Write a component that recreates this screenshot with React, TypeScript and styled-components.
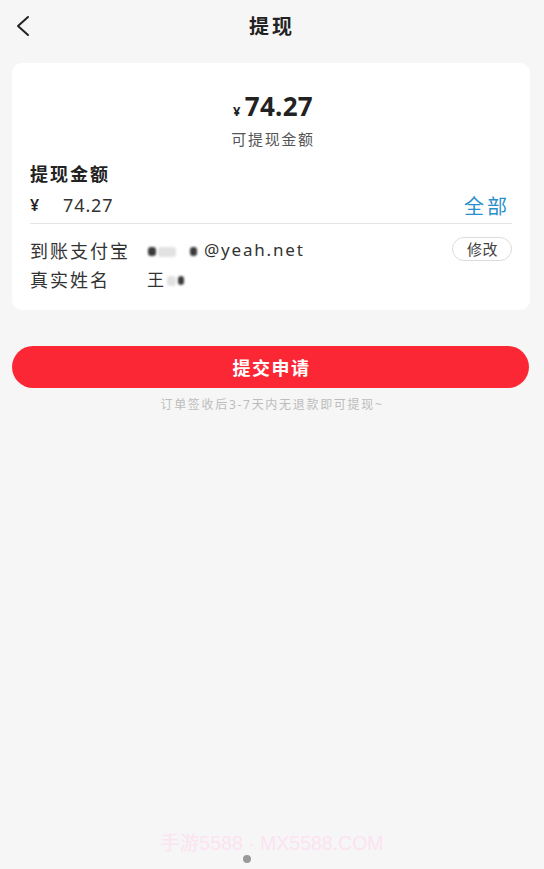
import React from 'react';
import styled, { createGlobalStyle } from 'styled-components';

const GlobalStyle = createGlobalStyle`
  html, body {
    margin: 0;
    padding: 0;
    background: #f6f6f6;
  }
  body {
    font-family: "Noto Sans", "Noto Sans CJK SC", sans-serif;
    color: #333;
  }
`;

const Page = styled.div`
  width: 544px;
  height: 869px;
  display: flex;
  flex-direction: column;
  background: #f6f6f6;
  overflow: hidden;
`;

const Header = styled.header`
  height: 52px;
  display: flex;
  align-items: center;
  justify-content: center;
  position: relative;
`;

const BackButton = styled.button`
  position: absolute;
  left: 10px;
  top: 12px;
  width: 28px;
  height: 28px;
  border: none;
  background: none;
  padding: 0;
  display: flex;
  align-items: center;
  justify-content: center;
`;

const Title = styled.h1`
  margin: 0 0 2px 0;
  font-size: 20px;
  font-weight: 600;
  color: #222;
  letter-spacing: 3px;
`;

const Card = styled.section`
  margin: 11px 14px 0 12px;
  background: #fff;
  border-radius: 10px;
  padding: 26px 18px 17px 18px;
  display: flex;
  flex-direction: column;
`;

const Balance = styled.div`
  display: flex;
  flex-direction: column;
  align-items: center;
  padding-left: 4px;
`;

const BigAmount = styled.div`
  display: flex;
  align-items: baseline;
  color: #222;
  font-family: "Noto Sans", sans-serif;
  font-weight: 700;
  font-size: 26px;
  line-height: 34px;
  letter-spacing: 0.3px;
  span {
    font-size: 13px;
    margin-right: 4px;
  }
`;

const BalanceLabel = styled.div`
  font-size: 15px;
  line-height: 20px;
  letter-spacing: 1.7px;
  color: #555;
  margin-top: 1px;
`;

const SectionLabel = styled.div`
  margin-top: 13px;
  font-size: 18px;
  line-height: 24px;
  letter-spacing: 2px;
  font-weight: 700;
  color: #222;
`;

const InputRow = styled.div`
  display: flex;
  align-items: center;
  height: 36px;
  margin-top: 1px;
  border-bottom: 1px solid #e4e4e4;
`;

const Yen = styled.span`
  font-size: 16px;
  font-weight: 600;
  color: #222;
  width: 33px;
`;

const AmountValue = styled.span`
  flex: 1;
  font-size: 18px;
  color: #333;
  letter-spacing: 0.9px;
`;

const AllLink = styled.span`
  font-size: 20px;
  color: #2b8fcb;
  letter-spacing: 3px;
  margin-right: 2px;
`;

const InfoList = styled.div`
  margin-top: 11px;
  display: flex;
  flex-direction: column;
`;

const InfoRow = styled.div`
  display: flex;
  align-items: center;
  height: 29px;
  font-size: 17px;
  color: #333;
`;

const InfoLabel = styled.span`
  width: 117px;
  flex-shrink: 0;
  font-size: 18px;
  letter-spacing: 2px;
`;

const InfoValue = styled.span`
  flex: 1;
  display: flex;
  align-items: center;
  letter-spacing: 1.8px;
`;

const Mask = styled.span<{ $w: number; $dark?: boolean }>`
  display: inline-block;
  width: ${(p) => p.$w}px;
  height: ${(p) => (p.$dark ? 9 : 10)}px;
  margin: 4px 1px 0 1px;
  background: ${(p) => (p.$dark ? '#3a3a3a' : '#e2e2e2')};
  filter: blur(1.2px);
  border-radius: 3px;
`;

const Gap = styled.span<{ $w: number }>`
  display: inline-block;
  width: ${(p) => p.$w}px;
`;

const EditButton = styled.button`
  border: 1px solid #dcdcdc;
  background: #fff;
  border-radius: 12px;
  height: 24px;
  width: 60px;
  font-size: 15px;
  letter-spacing: 0.5px;
  color: #444;
  padding: 0 0 0 1px;
  font-family: inherit;
  margin-top: -2px;
`;

const SubmitButton = styled.button`
  margin: 36px 15px 0 12px;
  height: 42px;
  border: none;
  border-radius: 21px;
  background: #fb2735;
  color: #fff;
  font-size: 18px;
  font-weight: 700;
  font-family: inherit;
  letter-spacing: 1.5px;
  padding: 0 0 0 2px;
`;

const Note = styled.div`
  text-align: center;
  font-size: 12px;
  line-height: 16px;
  letter-spacing: 1.7px;
  color: #bcbcbc;
  margin-top: 9px;
`;

const Spacer = styled.div`
  flex: 1;
`;

const Watermark = styled.div`
  text-align: center;
  font-size: 19.5px;
  line-height: 24px;
  color: #fce3f1;
  font-family: "Liberation Sans", "Noto Sans CJK SC", sans-serif;
`;

const Dot = styled.div`
  width: 8px;
  height: 8px;
  border-radius: 50%;
  background: #9a9a9a;
  margin: 0 0 6px 243px;
`;

export default function App() {
  return (
    <Page>
      <GlobalStyle />
      <Header>
        <BackButton aria-label="back">
          <svg width="22" height="22" viewBox="0 0 22 22" fill="none">
            <path d="M15 2 L5 11 L15 20" stroke="#222" strokeWidth="2" strokeLinecap="round" strokeLinejoin="round" />
          </svg>
        </BackButton>
        <Title>提现</Title>
      </Header>

      <Card>
        <Balance>
          <BigAmount>
            <span>¥</span>74.27
          </BigAmount>
          <BalanceLabel>可提现金额</BalanceLabel>
        </Balance>

        <SectionLabel>提现金额</SectionLabel>
        <InputRow>
          <Yen>¥</Yen>
          <AmountValue>74.27</AmountValue>
          <AllLink>全部</AllLink>
        </InputRow>

        <InfoList>
          <InfoRow>
            <InfoLabel>到账支付宝</InfoLabel>
            <InfoValue>
              <Mask $w={8} $dark />
              <Mask $w={18} />
              <Gap $w={12} />
              <Mask $w={7} $dark />
              <Gap $w={6} />
              @yeah.net
            </InfoValue>
            <EditButton>修改</EditButton>
          </InfoRow>
          <InfoRow>
            <InfoLabel>真实姓名</InfoLabel>
            <InfoValue>
              王<Mask $w={9} />
              <Mask $w={6} $dark />
            </InfoValue>
          </InfoRow>
        </InfoList>
      </Card>

      <SubmitButton>提交申请</SubmitButton>
      <Note>订单签收后3-7天内无退款即可提现~</Note>

      <Spacer />
      <Watermark>手游5588 · MX5588.COM</Watermark>
      <Dot />
    </Page>
  );
}
